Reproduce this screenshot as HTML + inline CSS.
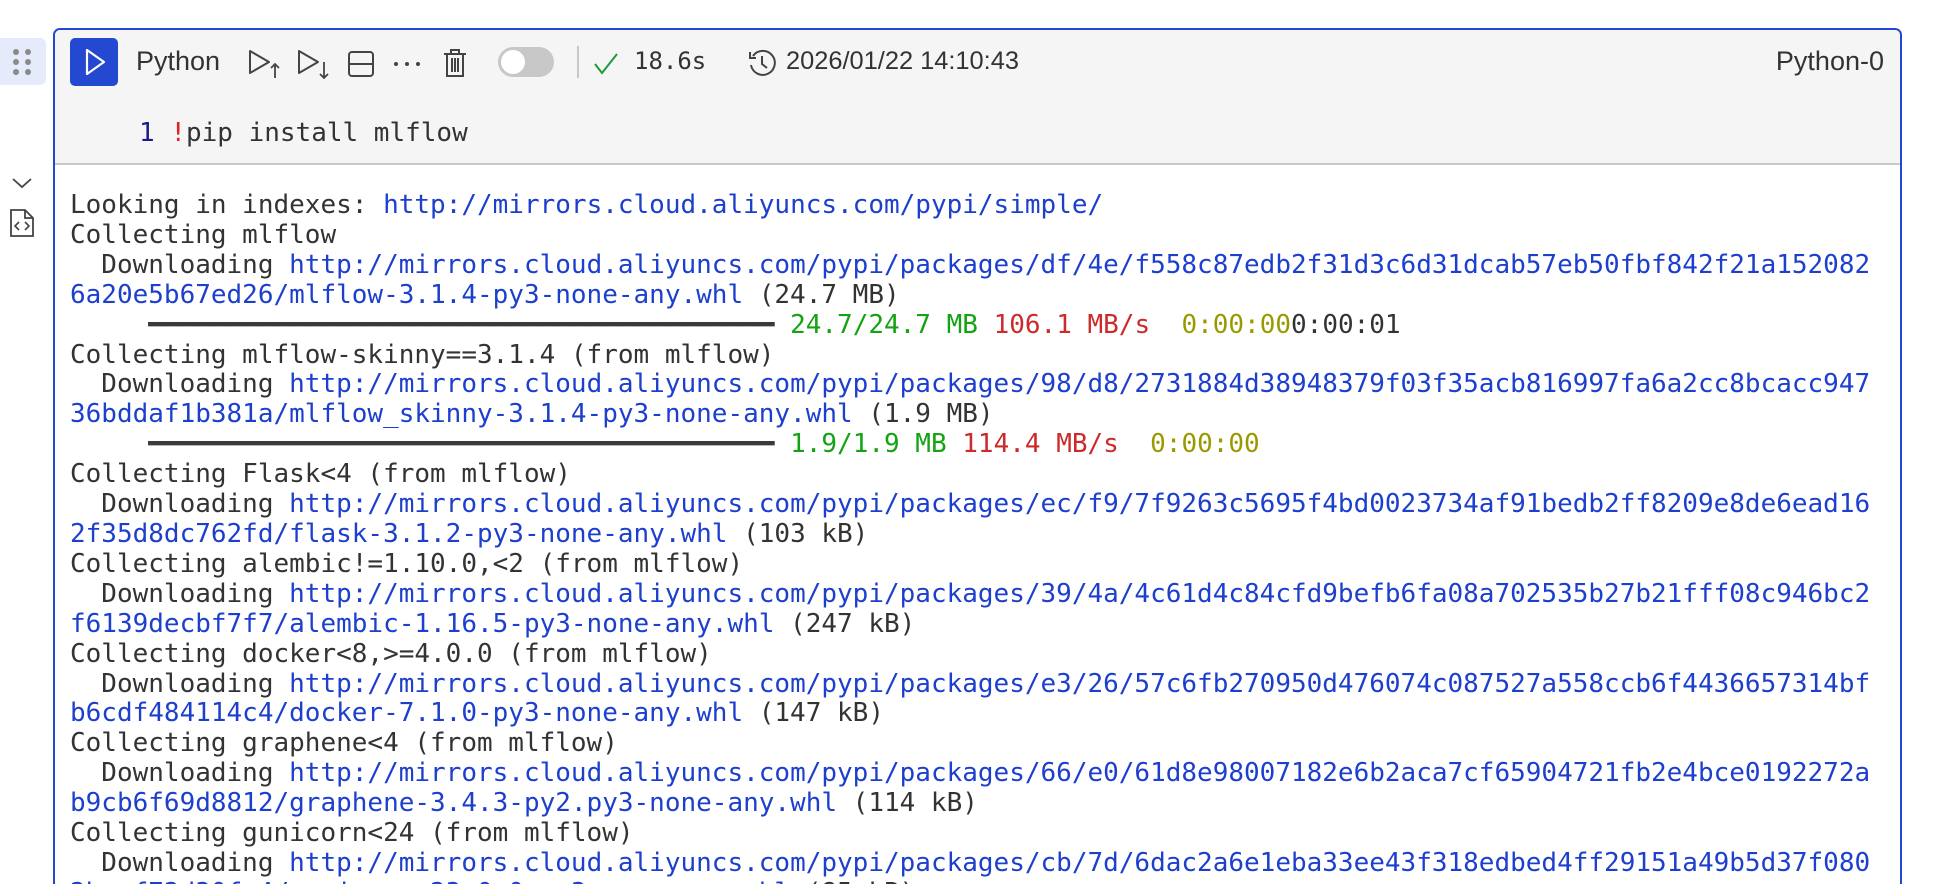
<!DOCTYPE html>
<html><head><meta charset="utf-8"><style>
*{margin:0;padding:0;box-sizing:border-box}
html,body{width:1934px;height:884px;overflow:hidden}
body{background:#fff;position:relative;font-family:"Liberation Sans",sans-serif;color:#333}
.handle{position:absolute;left:0;top:38px;width:46px;height:47px;background:#e6ebfb;border-radius:0 6px 6px 0}
.card{position:absolute;left:53px;top:28px;width:1849px;height:856px;border:2px solid #2448d0;border-bottom:none;border-radius:7px 7px 0 0;overflow:hidden}
.head{position:absolute;left:0;top:0;right:0;height:135px;background:#f5f5f5;border-bottom:2px solid #c8c8c8}
.run{position:absolute;left:15px;top:8px;width:48px;height:48px;background:#2448d0;border-radius:5px}
.t{position:absolute;white-space:pre}
.mono{font-family:"DejaVu Sans Mono","Liberation Mono",monospace}
.out{position:absolute;left:15px;top:161px;font-family:"DejaVu Sans Mono",monospace;font-size:26px;line-height:29.9px;white-space:pre;color:#333}
.b{color:#1d3fcd}.g{color:#13a313}.r{color:#cc2b2b}.o{color:#9a9a00}
</style></head><body>
<div class="handle">
<svg width="46" height="47" viewBox="0 0 46 47"><g fill="#8a8a8a"><circle cx="16" cy="14" r="3"/><circle cx="28" cy="14" r="3"/><circle cx="16" cy="24" r="3"/><circle cx="28" cy="24" r="3"/><circle cx="16" cy="34" r="3"/><circle cx="28" cy="34" r="3"/></g></svg>
</div>
<svg style="position:absolute;left:10px;top:176px" width="24" height="14"><path d="M3 3 L12 11 L21 3" fill="none" stroke="#444" stroke-width="1.8"/></svg>
<svg style="position:absolute;left:9px;top:208px" width="26" height="30"><path d="M2 2 H16 L24 10 V28 H2 Z M16 2 V10 H24" fill="none" stroke="#444" stroke-width="1.8"/><path d="M10 14 L6 18 L10 22 M16 14 L20 18 L16 22" fill="none" stroke="#444" stroke-width="1.6"/></svg>
<div class="card">
<div class="head">
<div class="run"><svg width="48" height="48"><path d="M17 12 L34 24 L17 36 Z" fill="none" stroke="#fff" stroke-width="2.2" stroke-linejoin="round"/></svg></div>
<div class="t" style="left:81px;top:16px;font-size:27px;color:#333">Python</div>
<svg style="position:absolute;left:192px;top:18px" width="36" height="32"><path d="M3 3 L22 14 L3 25 Z" fill="none" stroke="#444" stroke-width="2" stroke-linejoin="round"/><path d="M28 30 V16 M24 20 L28 16 L32 20" fill="none" stroke="#444" stroke-width="1.8"/></svg>
<svg style="position:absolute;left:241px;top:18px" width="36" height="32"><path d="M3 3 L22 14 L3 25 Z" fill="none" stroke="#444" stroke-width="2" stroke-linejoin="round"/><path d="M28 14 V30 M24 26 L28 30 L32 26" fill="none" stroke="#444" stroke-width="1.8"/></svg>
<svg style="position:absolute;left:292px;top:20px" width="30" height="28"><rect x="2" y="2" width="24" height="24" rx="3" fill="none" stroke="#444" stroke-width="2"/><path d="M2 14 H26" stroke="#444" stroke-width="2"/></svg>
<svg style="position:absolute;left:337px;top:30px" width="30" height="8"><g fill="#444"><circle cx="4" cy="4" r="2"/><circle cx="15" cy="4" r="2"/><circle cx="26" cy="4" r="2"/></g></svg>
<svg style="position:absolute;left:387px;top:17px" width="26" height="32"><path d="M2 7 H24 M9 7 V3 H17 V7 M5 7 V29 H21 V7 M10 11 V25 M13 11 V25 M16 11 V25" fill="none" stroke="#444" stroke-width="2"/></svg>
<div style="position:absolute;left:443px;top:17px;width:56px;height:30px;background:#c8c8c8;border-radius:15px"><div style="position:absolute;left:3px;top:3px;width:24px;height:24px;background:#fff;border-radius:50%"></div></div>
<div style="position:absolute;left:522px;top:16px;width:1.5px;height:32px;background:#c8c8c8"></div>
<svg style="position:absolute;left:537px;top:20px" width="28" height="28"><path d="M3 14 L10 23 L25 4" fill="none" stroke="#1e9a3a" stroke-width="2"/></svg>
<div class="t mono" style="left:579px;top:17px;font-size:24px;color:#333">18.6s</div>
<svg style="position:absolute;left:692px;top:18px" width="30" height="30"><path d="M6 8 A12 12 0 1 1 4 17" fill="none" stroke="#444" stroke-width="2"/><path d="M3 4 V10 H9" fill="none" stroke="#444" stroke-width="2"/><path d="M15 8 V16 L20 20" fill="none" stroke="#444" stroke-width="2"/></svg>
<div class="t" style="left:731px;top:17px;font-size:25.4px;color:#333">2026/01/22 14:10:43</div>
<div class="t" style="right:16px;top:16px;font-size:27px;color:#333">Python-0</div>
<div class="t mono" style="left:84px;top:88px;font-size:26px;color:#333"><span style="color:#1a1a8a">1</span> <span style="color:#d22">!</span>pip install mlflow</div>
</div>
<div class="out">Looking in indexes: <span class="b">http://mirrors.cloud.aliyuncs.com/pypi/simple/</span>
Collecting mlflow
  Downloading <span class="b">http://mirrors.cloud.aliyuncs.com/pypi/packages/df/4e/f558c87edb2f31d3c6d31dcab57eb50fbf842f21a152082</span>
<span class="b">6a20e5b67ed26/mlflow-3.1.4-py3-none-any.whl</span> (24.7 MB)
     <span style="color:#3a3a3a">━━━━━━━━━━━━━━━━━━━━━━━━━━━━━━━━━━━━━━━━</span> <span class="g">24.7/24.7 MB</span> <span class="r">106.1 MB/s</span>  <span class="o">0:00:00</span>0:00:01
Collecting mlflow-skinny==3.1.4 (from mlflow)
  Downloading <span class="b">http://mirrors.cloud.aliyuncs.com/pypi/packages/98/d8/2731884d38948379f03f35acb816997fa6a2cc8bcacc947</span>
<span class="b">36bddaf1b381a/mlflow_skinny-3.1.4-py3-none-any.whl</span> (1.9 MB)
     <span style="color:#3a3a3a">━━━━━━━━━━━━━━━━━━━━━━━━━━━━━━━━━━━━━━━━</span> <span class="g">1.9/1.9 MB</span> <span class="r">114.4 MB/s</span>  <span class="o">0:00:00</span>
Collecting Flask&lt;4 (from mlflow)
  Downloading <span class="b">http://mirrors.cloud.aliyuncs.com/pypi/packages/ec/f9/7f9263c5695f4bd0023734af91bedb2ff8209e8de6ead16</span>
<span class="b">2f35d8dc762fd/flask-3.1.2-py3-none-any.whl</span> (103 kB)
Collecting alembic!=1.10.0,&lt;2 (from mlflow)
  Downloading <span class="b">http://mirrors.cloud.aliyuncs.com/pypi/packages/39/4a/4c61d4c84cfd9befb6fa08a702535b27b21fff08c946bc2</span>
<span class="b">f6139decbf7f7/alembic-1.16.5-py3-none-any.whl</span> (247 kB)
Collecting docker&lt;8,&gt;=4.0.0 (from mlflow)
  Downloading <span class="b">http://mirrors.cloud.aliyuncs.com/pypi/packages/e3/26/57c6fb270950d476074c087527a558ccb6f4436657314bf</span>
<span class="b">b6cdf484114c4/docker-7.1.0-py3-none-any.whl</span> (147 kB)
Collecting graphene&lt;4 (from mlflow)
  Downloading <span class="b">http://mirrors.cloud.aliyuncs.com/pypi/packages/66/e0/61d8e98007182e6b2aca7cf65904721fb2e4bce0192272a</span>
<span class="b">b9cb6f69d8812/graphene-3.4.3-py2.py3-none-any.whl</span> (114 kB)
Collecting gunicorn&lt;24 (from mlflow)
  Downloading <span class="b">http://mirrors.cloud.aliyuncs.com/pypi/packages/cb/7d/6dac2a6e1eba33ee43f318edbed4ff29151a49b5d37f080</span>
<span class="b">2bcaf72d30fc4/gunicorn-23.0.0-py3-none-any.whl</span> (85 kB)</div>
</div>
</body></html>
